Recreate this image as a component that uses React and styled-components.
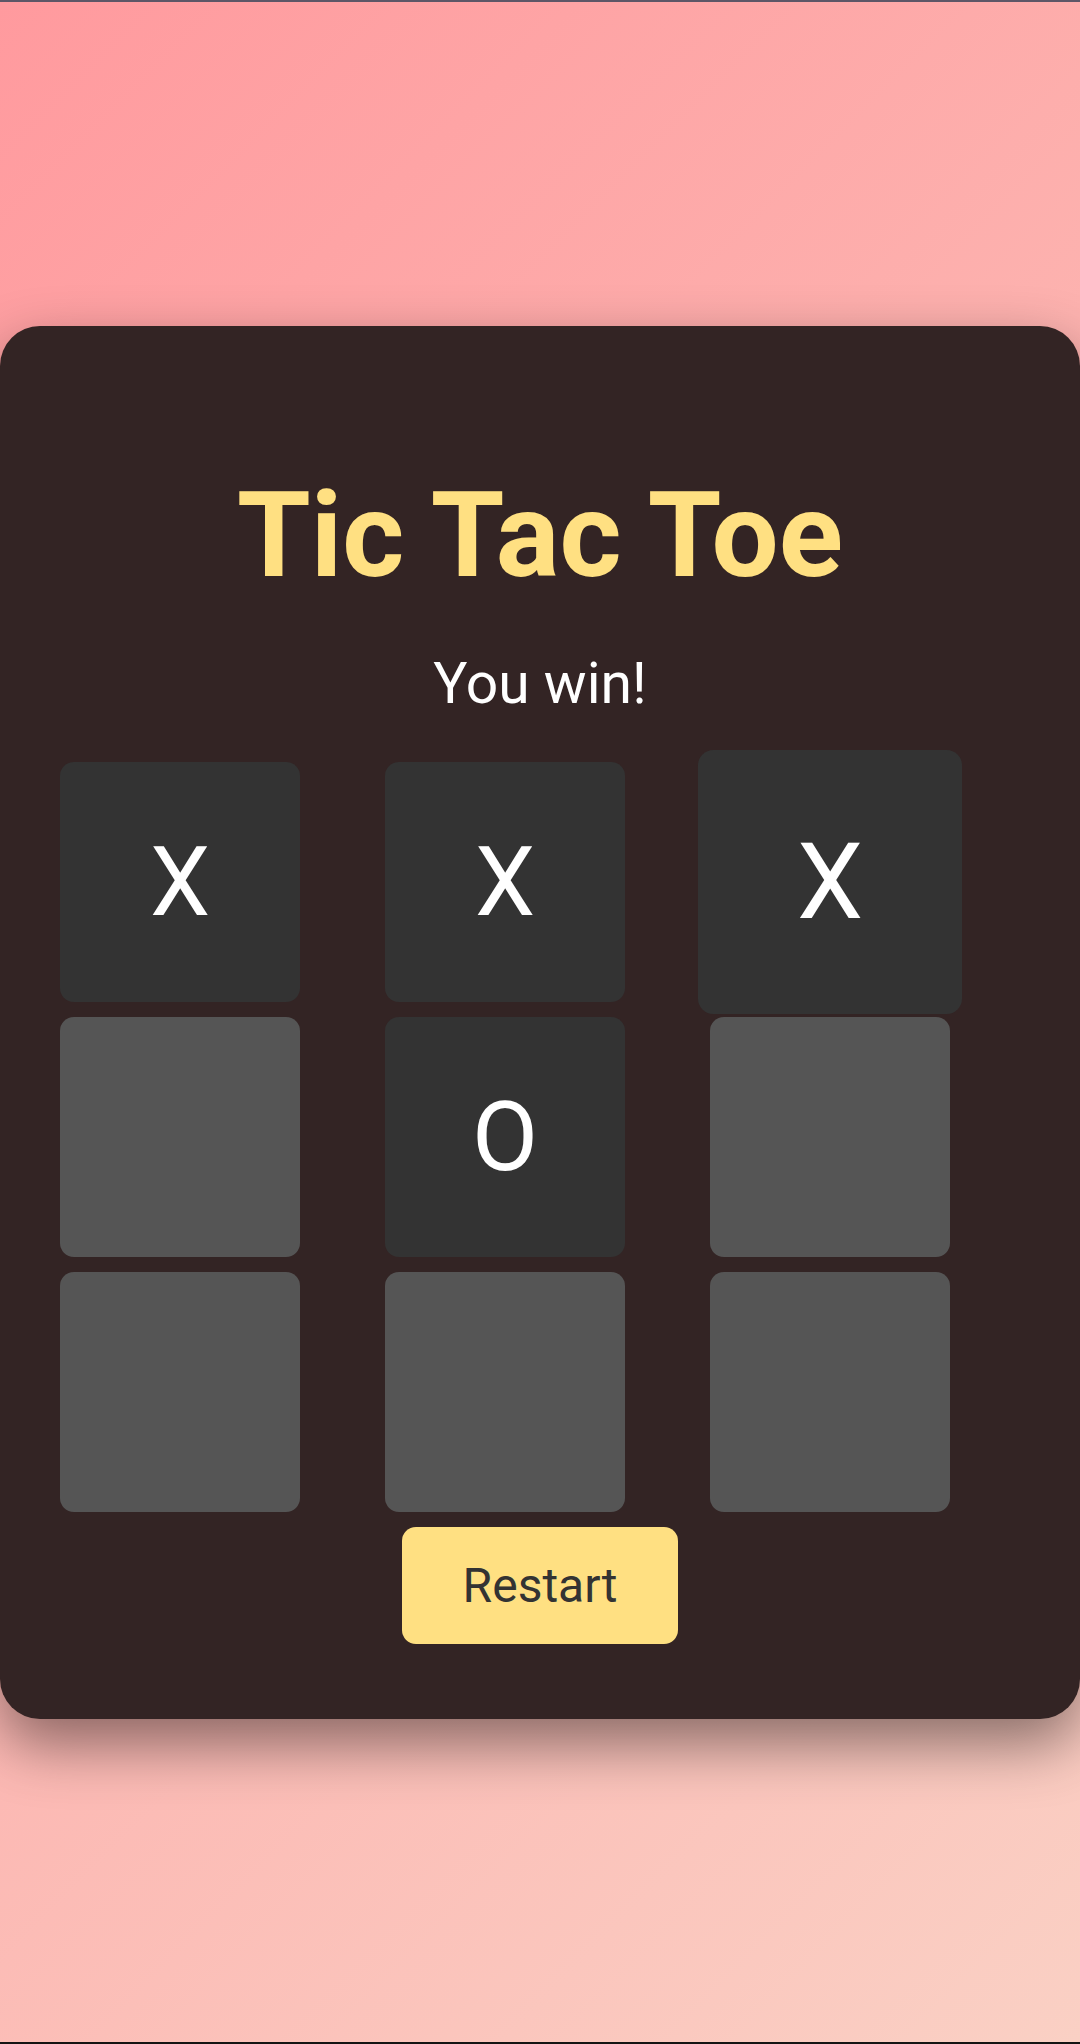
import styled, { createGlobalStyle } from 'styled-components';

const GlobalStyle = createGlobalStyle`
  * {
    box-sizing: border-box;
  }

  body {
    margin: 0;
    font-family: Roboto, 'Liberation Sans', sans-serif;
  }
`;

const Page = styled.div`
  min-height: 2044px;
  display: flex;
  align-items: center;
  justify-content: center;
  background: linear-gradient(135deg, #ff9a9e 0%, #fad0c4 100%);
  border-top: 2px solid #5d5667;
  border-bottom: 2px solid #141414;
`;

const Card = styled.div`
  width: 1080px;
  background-color: #332424;
  border-radius: 40px;
  box-shadow: 0 25px 60px rgba(0, 0, 0, 0.45);
  display: flex;
  flex-direction: column;
  align-items: center;
  padding: 140px 0 75px;
`;

const Title = styled.h1`
  margin: 0;
  font-size: 119px;
  font-weight: 700;
  color: #ffe082;
  line-height: normal;
`;

const Status = styled.p`
  margin: 45px 0 0;
  font-size: 57px;
  color: #ffffff;
  line-height: normal;
`;

const Board = styled.div`
  align-self: stretch;
  display: grid;
  grid-template-columns: repeat(3, 240px);
  grid-auto-rows: 240px;
  column-gap: 85px;
  row-gap: 15px;
  padding-left: 60px;
  margin-top: 45px;
`;

const Cell = styled.div`
  display: flex;
  align-items: center;
  justify-content: center;
  border-radius: 14px;
  background-color: ${(p) => (p.$filled ? '#333333' : '#555555')};
  color: #ffffff;
  font-size: 96px;
  line-height: normal;
  transform: ${(p) => (p.$hover ? 'scale(1.1)' : 'none')};
`;

const RestartButton = styled.button`
  margin-top: 15px;
  border: none;
  border-radius: 14px;
  background-color: #ffe082;
  color: #333333;
  font-family: Roboto, 'Liberation Sans', sans-serif;
  font-size: 48px;
  line-height: normal;
  padding: 30px 61px;
  cursor: pointer;
`;

const board = ['X', 'X', 'X', '', 'O', '', '', '', ''];

function App() {
  return (
    <>
      <GlobalStyle />
      <Page>
        <Card>
          <Title>Tic Tac Toe</Title>
          <Status>You win!</Status>
          <Board>
            {board.map((value, i) => (
              <Cell key={i} $filled={value !== ''} $hover={i === 2}>
                {value}
              </Cell>
            ))}
          </Board>
          <RestartButton>Restart</RestartButton>
        </Card>
      </Page>
    </>
  );
}

export default App;
